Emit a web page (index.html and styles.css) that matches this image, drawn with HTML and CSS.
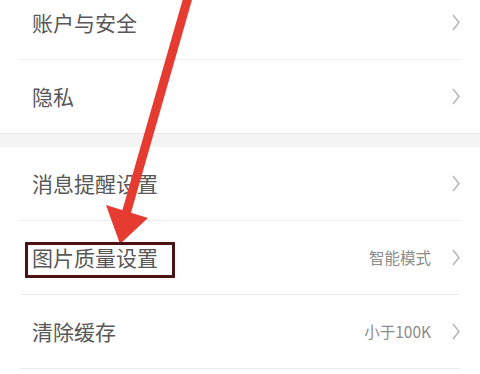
FILE: index.html
```html
<!DOCTYPE html>
<html lang="zh-CN">
<head>
<meta charset="utf-8">
<title>设置</title>
<link rel="stylesheet" href="styles.css">
</head>
<body>
<div class="page">
  <div class="list first">
    <div class="row"><span class="label">账户与安全</span><span class="right"><svg class="chev" viewBox="0 0 8 17"><path d="M1 1 L7 8.5 L1 16"/></svg></span></div>
    <div class="row last"><span class="label">隐私</span><span class="right"><svg class="chev" viewBox="0 0 8 17"><path d="M1 1 L7 8.5 L1 16"/></svg></span></div>
  </div>
  <div class="band"></div>
  <div class="list">
    <div class="row"><span class="label">消息提醒设置</span><span class="right"><svg class="chev" viewBox="0 0 8 17"><path d="M1 1 L7 8.5 L1 16"/></svg></span></div>
    <div class="row"><span class="label">图片质量设置</span><span class="right"><span class="value">智能模式</span><svg class="chev" viewBox="0 0 8 17"><path d="M1 1 L7 8.5 L1 16"/></svg></span></div>
    <div class="row"><span class="label">清除缓存</span><span class="right"><span class="value">小于100K</span><svg class="chev" viewBox="0 0 8 17"><path d="M1 1 L7 8.5 L1 16"/></svg></span></div>
  </div>
  <svg class="annot" viewBox="0 0 480 374">
    <line x1="189" y1="-6" x2="126" y2="214" stroke="#e63b31" stroke-width="9" stroke-linecap="butt"/>
    <polygon points="106,205 148,218 120,244" fill="#e63b31"/>
    <rect x="26.5" y="243.5" width="147" height="33" fill="none" stroke="#4a1414" stroke-width="3"/>
  </svg>
</div>
</body>
</html>
```
FILE: styles.css
```css
html, body {
  margin: 0;
  padding: 0;
  background: #ffffff;
}
.page {
  position: relative;
  width: 480px;
  height: 374px;
  overflow: hidden;
  font-family: "Noto Sans CJK SC", "Noto Sans", sans-serif;
}
.list {
  padding: 0 20px;
}
.list.first {
  margin-top: -14px;
}
.row {
  height: 73px;
  border-bottom: 1px solid #ececec;
  display: flex;
  align-items: center;
  justify-content: space-between;
  padding-left: 12px;
}
.row.last {
  border-bottom: none;
}
.label {
  font-size: 21px;
  color: #585858;
  line-height: 1;
}
.right {
  display: flex;
  align-items: center;
  gap: 21px;
}
.value {
  font-size: 15.5px;
  color: #8c8c8c;
  line-height: 1;
}
.chev {
  width: 8px;
  height: 17px;
  display: block;
}
.chev path {
  fill: none;
  stroke: #b3b3b3;
  stroke-width: 1.4;
}
.band {
  height: 13px;
  background: #f4f4f4;
  border-top: 1px solid #ebebeb;
}
.annot {
  position: absolute;
  left: 0;
  top: 0;
  width: 480px;
  height: 374px;
}
```
